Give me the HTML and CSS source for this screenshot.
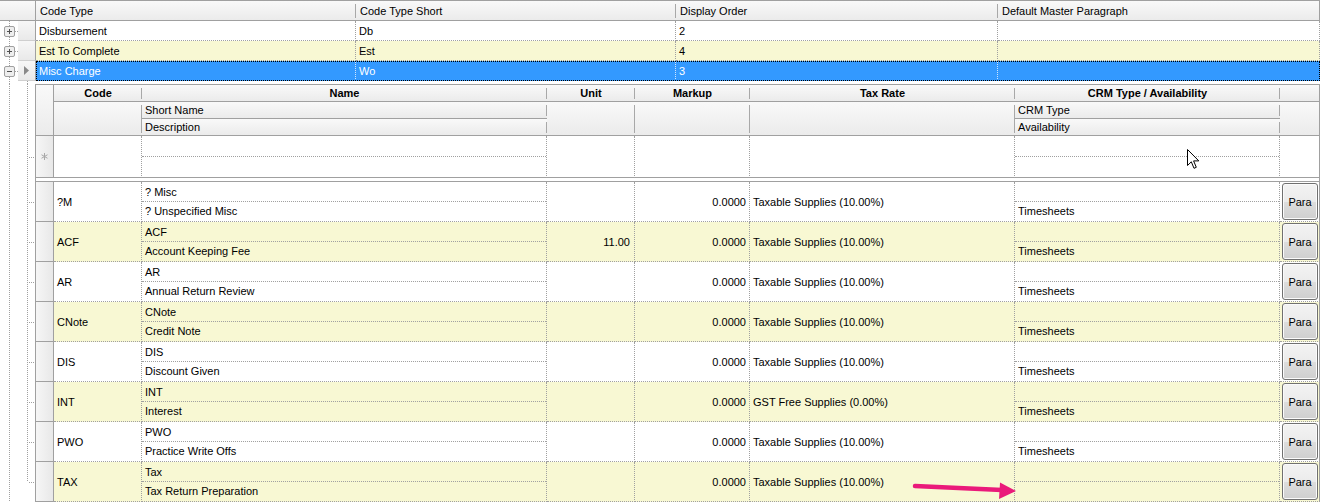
FILE: index.html
```html
<!DOCTYPE html>
<html lang="en">
<head>
    <meta charset="UTF-8">
    <title>Code Types</title>
    <link rel="stylesheet" href="styles.css">
</head>
<body>
<div class="page">

    <!-- master grid -->
    <div class="mhead">
        <div class="corner"></div>
        <div class="hc w1">Code Type</div>
        <div class="hc w2">Code Type Short</div>
        <div class="hc w3">Display Order</div>
        <div class="hc w4 end">Default Master Paragraph</div>
    </div>

    <div class="mrow">
        <div class="tree">
            <svg class="exp" width="11" height="11" viewBox="0 0 11 11"><rect x="0.5" y="0.5" width="10" height="10" rx="1.5" fill="#eeeeee" stroke="#a0a0a0"/><path d="M3 5.5h5M5.5 3v5" stroke="#505050"/></svg>
        </div>
        <div class="mind"></div>
        <div class="mdata">
            <div class="mc w1">Disbursement</div>
            <div class="mc w2">Db</div>
            <div class="mc w3">2</div>
            <div class="mc w4"></div>
        </div>
    </div>
    <div class="mrow alt">
        <div class="tree">
            <svg class="exp" width="11" height="11" viewBox="0 0 11 11"><rect x="0.5" y="0.5" width="10" height="10" rx="1.5" fill="#eeeeee" stroke="#a0a0a0"/><path d="M3 5.5h5M5.5 3v5" stroke="#505050"/></svg>
        </div>
        <div class="mind"></div>
        <div class="mdata">
            <div class="mc w1">Est To Complete</div>
            <div class="mc w2">Est</div>
            <div class="mc w3">4</div>
            <div class="mc w4"></div>
        </div>
    </div>
    <div class="mrow sel">
        <div class="tree">
            <svg class="exp" width="11" height="11" viewBox="0 0 11 11"><rect x="0.5" y="0.5" width="10" height="10" rx="1.5" fill="#eeeeee" stroke="#a0a0a0"/><path d="M3 5.5h5" stroke="#505050"/></svg>
        </div>
        <div class="mind">
            <svg width="5" height="9" viewBox="0 0 5 9"><path d="M0 0L5 4.5L0 9Z" fill="#8a8a8a"/></svg>
        </div>
        <div class="mdata">
            <div class="mc w1">Misc Charge</div>
            <div class="mc w2">Wo</div>
            <div class="mc w3">3</div>
            <div class="mc w4"></div>
        </div>
    </div>

    <!-- detail grid -->
    <div class="drow gap"><div class="dgut plain"></div></div>

    <div class="drow">
        <div class="dgut plain"></div>
        <div class="dhead">
            <div class="dh ind"></div>
            <div class="dh band">Code</div>
            <div class="dh band">Name</div>
            <div class="dh band">Unit</div>
            <div class="dh band">Markup</div>
            <div class="dh band">Tax Rate</div>
            <div class="dh band">CRM Type / Availability</div>
            <div class="dh band end"></div>
            <div class="dh tall"></div>
            <div class="dh">Short Name</div>
            <div class="dh tall"></div>
            <div class="dh tall"></div>
            <div class="dh tall"></div>
            <div class="dh">CRM Type</div>
            <div class="dh tall end"></div>
            <div class="dh">Description</div>
            <div class="dh">Availability</div>
        </div>
    </div>

    <div class="drow newrow">
        <div class="dgut"></div>
        <div class="dcells">
            <div class="ci">
                <svg width="7" height="7" viewBox="0 0 7 7"><path d="M3.5 0v7M0.5 1.75L6.5 5.25M0.5 5.25L6.5 1.75" stroke="#a8a8a8"/></svg>
            </div>
            <div class="cc k1"></div>
            <div class="cc k2"><div class="sub1"></div><div class="sub2"></div></div>
            <div class="cc k3"></div>
            <div class="cc k4"></div>
            <div class="cc k5"></div>
            <div class="cc k6"><div class="sub1"></div><div class="sub2"></div></div>
            <div class="cc k7"></div>
        </div>
    </div>

    <div class="drow sep"><div class="dgut plain"></div><div class="sepbar"></div></div>

    <div class="drow data">
        <div class="dgut"></div>
        <div class="dcells">
            <div class="ci"></div>
            <div class="cc k1 mid">?M</div>
            <div class="cc k2"><div class="sub1">? Misc</div><div class="sub2">? Unspecified Misc</div></div>
            <div class="cc k3 num"></div>
            <div class="cc k4 num">0.0000</div>
            <div class="cc k5 mid">Taxable Supplies (10.00%)</div>
            <div class="cc k6"><div class="sub1"></div><div class="sub2">Timesheets</div></div>
            <div class="cc k7"><button class="pbtn">Para</button></div>
        </div>
    </div>
    <div class="drow data alt">
        <div class="dgut"></div>
        <div class="dcells">
            <div class="ci"></div>
            <div class="cc k1 mid">ACF</div>
            <div class="cc k2"><div class="sub1">ACF</div><div class="sub2">Account Keeping Fee</div></div>
            <div class="cc k3 num">11.00</div>
            <div class="cc k4 num">0.0000</div>
            <div class="cc k5 mid">Taxable Supplies (10.00%)</div>
            <div class="cc k6"><div class="sub1"></div><div class="sub2">Timesheets</div></div>
            <div class="cc k7"><button class="pbtn">Para</button></div>
        </div>
    </div>
    <div class="drow data">
        <div class="dgut"></div>
        <div class="dcells">
            <div class="ci"></div>
            <div class="cc k1 mid">AR</div>
            <div class="cc k2"><div class="sub1">AR</div><div class="sub2">Annual Return Review</div></div>
            <div class="cc k3 num"></div>
            <div class="cc k4 num">0.0000</div>
            <div class="cc k5 mid">Taxable Supplies (10.00%)</div>
            <div class="cc k6"><div class="sub1"></div><div class="sub2">Timesheets</div></div>
            <div class="cc k7"><button class="pbtn">Para</button></div>
        </div>
    </div>
    <div class="drow data alt">
        <div class="dgut"></div>
        <div class="dcells">
            <div class="ci"></div>
            <div class="cc k1 mid">CNote</div>
            <div class="cc k2"><div class="sub1">CNote</div><div class="sub2">Credit Note</div></div>
            <div class="cc k3 num"></div>
            <div class="cc k4 num">0.0000</div>
            <div class="cc k5 mid">Taxable Supplies (10.00%)</div>
            <div class="cc k6"><div class="sub1"></div><div class="sub2">Timesheets</div></div>
            <div class="cc k7"><button class="pbtn">Para</button></div>
        </div>
    </div>
    <div class="drow data">
        <div class="dgut"></div>
        <div class="dcells">
            <div class="ci"></div>
            <div class="cc k1 mid">DIS</div>
            <div class="cc k2"><div class="sub1">DIS</div><div class="sub2">Discount Given</div></div>
            <div class="cc k3 num"></div>
            <div class="cc k4 num">0.0000</div>
            <div class="cc k5 mid">Taxable Supplies (10.00%)</div>
            <div class="cc k6"><div class="sub1"></div><div class="sub2">Timesheets</div></div>
            <div class="cc k7"><button class="pbtn">Para</button></div>
        </div>
    </div>
    <div class="drow data alt">
        <div class="dgut"></div>
        <div class="dcells">
            <div class="ci"></div>
            <div class="cc k1 mid">INT</div>
            <div class="cc k2"><div class="sub1">INT</div><div class="sub2">Interest</div></div>
            <div class="cc k3 num"></div>
            <div class="cc k4 num">0.0000</div>
            <div class="cc k5 mid">GST Free Supplies (0.00%)</div>
            <div class="cc k6"><div class="sub1"></div><div class="sub2">Timesheets</div></div>
            <div class="cc k7"><button class="pbtn">Para</button></div>
        </div>
    </div>
    <div class="drow data">
        <div class="dgut"></div>
        <div class="dcells">
            <div class="ci"></div>
            <div class="cc k1 mid">PWO</div>
            <div class="cc k2"><div class="sub1">PWO</div><div class="sub2">Practice Write Offs</div></div>
            <div class="cc k3 num"></div>
            <div class="cc k4 num">0.0000</div>
            <div class="cc k5 mid">Taxable Supplies (10.00%)</div>
            <div class="cc k6"><div class="sub1"></div><div class="sub2">Timesheets</div></div>
            <div class="cc k7"><button class="pbtn">Para</button></div>
        </div>
    </div>
    <div class="drow data alt">
        <div class="dgut last"></div>
        <div class="dcells">
            <div class="ci"></div>
            <div class="cc k1 mid">TAX</div>
            <div class="cc k2"><div class="sub1">Tax</div><div class="sub2">Tax Return Preparation</div></div>
            <div class="cc k3 num"></div>
            <div class="cc k4 num">0.0000</div>
            <div class="cc k5 mid">Taxable Supplies (10.00%)</div>
            <div class="cc k6"><div class="sub1"></div><div class="sub2"></div></div>
            <div class="cc k7"><button class="pbtn">Para</button></div>
        </div>
    </div>

    <!-- things drawn over the grid -->
    <svg class="cursor" width="13" height="21" viewBox="0 0 13 21"><path d="M0.5 0.5V16.5L4.3 12.8L7 19.3L9.3 18.3L6.6 11.9H11.8Z" fill="#fff" stroke="#000" stroke-linejoin="round"/></svg>
    <svg class="mark" width="110" height="24" viewBox="0 0 110 24"><path d="M3 6L90 10" stroke="#ea1a7a" stroke-width="4.5" stroke-linecap="round"/><path d="M88 2.5L104 11L87 19Z" fill="#ea1a7a"/></svg>
</div>
</body>
</html>
```

FILE: styles.css
```css
* {
    box-sizing: border-box;
}

body {
    margin: 0;
    background-color: white;
    font-family: "Liberation Sans", Arial, sans-serif;
    font-size: 11px;
    color: #000;
}

.page {
    position: relative;
    width: 1320px;
    height: 502px;
    overflow: hidden;
}

/* master grid */

.mhead {
    display: flex;
    height: 21px;
    border-top: 1px solid #a0a0a0;
    border-bottom: 1px solid #a0a0a0;
    background: linear-gradient(#f9f9f9, #ebebeb);
}

.corner {
    width: 36px;
    border-right: 1px solid #a0a0a0;
}

.hc {
    position: relative;
    padding: 1px 0 0 4px;
    line-height: 18px;
    white-space: nowrap;
}

.hc::after {
    content: "";
    position: absolute;
    right: 0;
    top: 3px;
    bottom: 2px;
    width: 1px;
    background-color: #a8a8a8;
}

.hc.end {
    border-right: 1px solid #a0a0a0;
}

.hc.end::after {
    display: none;
}

.w1 { width: 320px; }
.w2 { width: 320px; }
.w3 { width: 322px; }
.w4 { width: 322px; }

.mrow {
    display: flex;
    height: 20px;
}

.tree {
    width: 18px;
    flex: none;
    display: flex;
    align-items: center;
    padding-left: 4px;
    background:
        repeating-linear-gradient(#a0a0a0 0 1px, transparent 1px 2px) 9px 0 / 1px 100% no-repeat,
        repeating-linear-gradient(to right, #a0a0a0 0 1px, transparent 1px 2px) 15px 50% / 3px 1px no-repeat;
}

.exp {
    display: block;
}

.mind {
    width: 18px;
    flex: none;
    display: flex;
    align-items: center;
    justify-content: center;
    border-right: 1px solid #a0a0a0;
    border-bottom: 1px solid #cfcfcf;
    background: linear-gradient(#f7f7f7, #e9e9e9);
}

.mdata {
    display: flex;
    width: 1284px;
}

.mc {
    padding: 1px 0 0 3px;
    line-height: 18px;
    border-right: 1px dotted #a0a0a0;
    border-bottom: 1px dotted #a0a0a0;
    white-space: nowrap;
    overflow: hidden;
}

.mrow.alt .mdata {
    background-color: #f8f8d3;
}

.mrow.sel .mdata {
    background-color: #3399ff;
    color: white;
    outline: 1px dotted #000;
    outline-offset: -1px;
}

.mrow.sel .mc {
    border-right-color: #cfe6ff;
    border-bottom-color: #3399ff;
}

/* detail grid */

.drow {
    display: flex;
}

.dgut {
    width: 35px;
    flex: none;
    background:
        repeating-linear-gradient(#a0a0a0 0 1px, transparent 1px 2px) 9px 0 / 1px 100% no-repeat,
        repeating-linear-gradient(#a0a0a0 0 1px, transparent 1px 2px) 27px 0 / 1px 100% no-repeat,
        repeating-linear-gradient(to right, #a0a0a0 0 1px, transparent 1px 2px) 29px 50% / 6px 1px no-repeat;
}

.dgut.plain {
    background:
        repeating-linear-gradient(#a0a0a0 0 1px, transparent 1px 2px) 9px 0 / 1px 100% no-repeat,
        repeating-linear-gradient(#a0a0a0 0 1px, transparent 1px 2px) 27px 0 / 1px 100% no-repeat;
}

.dgut.last {
    background:
        repeating-linear-gradient(#a0a0a0 0 1px, transparent 1px 2px) 9px 0 / 1px 100% no-repeat,
        repeating-linear-gradient(#a0a0a0 0 1px, transparent 1px 2px) 27px 0 / 1px 50% no-repeat,
        repeating-linear-gradient(to right, #a0a0a0 0 1px, transparent 1px 2px) 29px 50% / 6px 1px no-repeat;
}

.drow.gap {
    height: 3px;
}

.dhead {
    display: grid;
    grid-template-columns: 19px 88px 405px 88px 115px 265px 265px 40px;
    grid-template-rows: 17px 17px 17px;
    width: 1285px;
    border-top: 1px solid #a0a0a0;
}

.dh {
    position: relative;
    padding: 1px 0 0 3px;
    line-height: 15px;
    white-space: nowrap;
    border-bottom: 1px solid #a0a0a0;
    background: linear-gradient(#f9f9f9, #ebebeb);
}

.dh::after {
    content: "";
    position: absolute;
    right: 0;
    top: 3px;
    bottom: 2px;
    width: 1px;
    background-color: #a8a8a8;
}

.dh.band {
    padding-left: 0;
    text-align: center;
    font-weight: bold;
}

.dh.tall {
    grid-row: span 2;
}

.dh.ind {
    grid-row: 1 / span 3;
    border-left: 1px solid #a0a0a0;
    border-right: 1px solid #a0a0a0;
}

.dh.end {
    border-right: 1px solid #a0a0a0;
}

.dh.ind::after,
.dh.end::after {
    display: none;
}

.dcells {
    display: flex;
    width: 1285px;
}

.ci {
    width: 19px;
    display: flex;
    align-items: center;
    justify-content: center;
    border-left: 1px solid #a0a0a0;
    border-right: 1px solid #a0a0a0;
    border-bottom: 1px solid #a0a0a0;
    background: linear-gradient(to right, #f6f6f6, #e8e8e8);
}

.cc {
    border-right: 1px dotted #a0a0a0;
    border-bottom: 1px dotted #a0a0a0;
    white-space: nowrap;
    overflow: hidden;
}

.k1 { width: 88px; }
.k2 { width: 405px; }
.k3 { width: 88px; padding-right: 4px; }
.k4 { width: 115px; padding-right: 3px; }
.k5 { width: 265px; }
.k6 { width: 265px; }

.k7 {
    width: 40px;
    padding: 1px 1px 0 2px;
    border-right: 1px solid #a0a0a0;
}

.mid {
    display: flex;
    align-items: center;
    padding-left: 3px;
}

.num {
    display: flex;
    align-items: center;
    justify-content: flex-end;
}

.sub1 {
    height: 20px;
    padding: 1px 0 0 3px;
    line-height: 18px;
    border-bottom: 1px dotted #a0a0a0;
}

.sub2 {
    padding-left: 3px;
    line-height: 19px;
}

.drow.data {
    height: 40px;
}

.drow.alt .cc {
    background-color: #f8f8d3;
}

.drow.newrow {
    height: 42px;
}

.drow.newrow .cc {
    border-bottom: 1px solid #a0a0a0;
}

.drow.newrow .sub1 {
    height: 21px;
}

.drow.sep {
    height: 4px;
}

.sepbar {
    width: 1285px;
    border-left: 1px solid #a0a0a0;
    border-right: 1px solid #a0a0a0;
    border-bottom: 1px solid #a0a0a0;
}

.pbtn {
    display: block;
    width: 36px;
    height: 37px;
    padding: 0;
    border: 1px solid #707070;
    border-radius: 3px;
    background: linear-gradient(#f3f3f3 0%, #ebebeb 50%, #dddddd 51%, #cfcfcf 100%);
    box-shadow: inset 0 0 0 1px #fbfbfb;
    font-family: "Liberation Sans", Arial, sans-serif;
    font-size: 11px;
    color: #000;
}

/* overlays */

.cursor {
    position: absolute;
    left: 1187px;
    top: 149px;
}

.mark {
    position: absolute;
    left: 912px;
    top: 480px;
}
```
